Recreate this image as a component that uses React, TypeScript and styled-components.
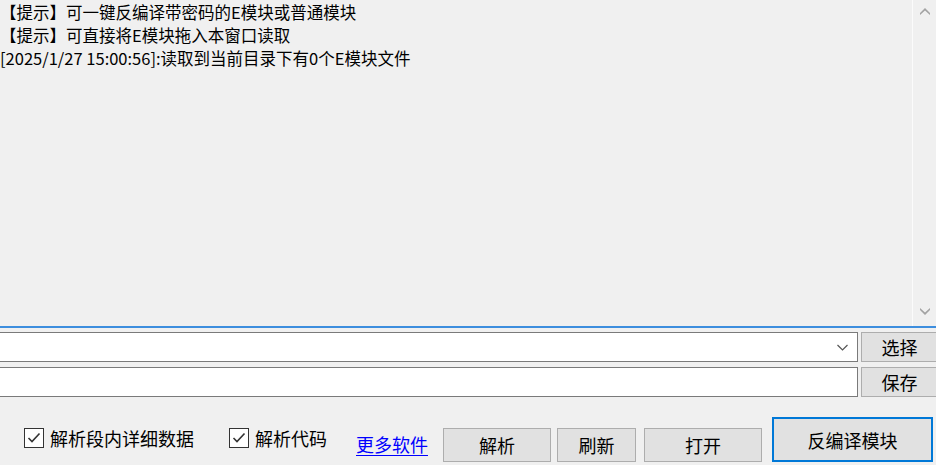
import React, { FC } from 'react';
import styled, { createGlobalStyle } from 'styled-components';

const GlobalStyle = createGlobalStyle`
  html, body {
    margin: 0;
    padding: 0;
    background: #f0f0f0;
    overflow: hidden;
  }
  * {
    box-sizing: border-box;
  }
`;

const Window = styled.div`
  width: 936px;
  height: 465px;
  overflow: hidden;
  background: #f0f0f0;
  display: flex;
  flex-direction: column;
  font-family: "Noto Sans CJK SC", "Microsoft YaHei", sans-serif;
  color: #000;
`;

const LogPanel = styled.div`
  height: 328px;
  flex: 0 0 auto;
  display: flex;
  border-bottom: 2px solid #3d8ede;
`;

const LogText = styled.div`
  flex: 1;
  padding: 1px 0 0 0;
  font-size: 16.5px;
  line-height: 23px;
`;

const LogLine = styled.div`
  white-space: nowrap;
`;

const ScrollBar = styled.div`
  width: 24px;
  border-left: 1px solid #fbfbfb;
  display: flex;
  flex-direction: column;
  justify-content: space-between;
  align-items: center;
  padding: 8px 0 11px;
`;

const FormArea = styled.div`
  flex: 1;
  display: flex;
  flex-direction: column;
  gap: 5px;
  padding-top: 4px;
`;

const FieldRow = styled.div`
  height: 30px;
  display: flex;
  gap: 3px;
  margin: 0 -2px;
`;

const Field = styled.div`
  flex: 1;
  background: #fff;
  border: 1px solid #7a7a7a;
  display: flex;
  align-items: center;
  justify-content: flex-end;
  padding-right: 9px;
`;

const Button = styled.button<{ $w: number; $h: number; $ml?: number; $default?: boolean }>`
  flex: 0 0 ${(p) => p.$w}px;
  height: ${(p) => p.$h}px;
  margin-left: ${(p) => p.$ml ?? 0}px;
  background: #e1e1e1;
  border: ${(p) => (p.$default ? '2px solid #0078d7' : '1px solid #adadad')};
  font-family: inherit;
  font-size: 18px;
  line-height: 1;
  color: #000;
  padding: 0;
  display: flex;
  align-items: center;
  justify-content: center;
`;

const ActionRow = styled.div`
  flex: 1;
  display: flex;
  align-items: flex-end;
  padding: 0 0 3px 24px;
`;

const CheckLabel = styled.label<{ $ml?: number }>`
  display: flex;
  align-items: center;
  gap: 6px;
  margin-left: ${(p) => p.$ml ?? 0}px;
  margin-bottom: 12px;
  font-size: 18px;
  line-height: 24px;
  white-space: nowrap;
`;

const CheckBox = styled.span`
  width: 20px;
  height: 20px;
  border: 1px solid #333;
  background: #fff;
  display: flex;
  align-items: center;
  justify-content: center;
`;

const Link = styled.a<{ $ml?: number }>`
  margin-left: ${(p) => p.$ml ?? 0}px;
  margin-bottom: 6px;
  font-size: 18px;
  line-height: 24px;
  color: #0000ff;
  text-decoration: underline;
  text-underline-offset: 3px;
  white-space: nowrap;
`;

const ArrowUp: FC = () => (
  <svg width="10" height="7" viewBox="0 0 10 7">
    <path d="M0 5 L5 0 L10 5 L10 7 L5 2.5 L0 7 Z" fill="#a3a3a3" />
  </svg>
);

const ArrowDown: FC = () => (
  <svg width="10" height="7" viewBox="0 0 10 7">
    <path d="M0 0 L5 4.5 L10 0 L10 2 L5 7 L0 2 Z" fill="#a3a3a3" />
  </svg>
);

const Chevron: FC = () => (
  <svg width="11" height="7" viewBox="0 0 11 7">
    <path d="M0.5 1 L5.5 6 L10.5 1" fill="none" stroke="#555" strokeWidth="1.2" />
  </svg>
);

const Check: FC = () => (
  <svg width="14" height="12" viewBox="0 0 14 12">
    <path d="M1.5 6 L5 9.5 L12.5 1.5" fill="none" stroke="#333" strokeWidth="1.6" />
  </svg>
);

const App: FC = () => {
  return (
    <>
      <GlobalStyle />
      <Window>
        <LogPanel>
          <LogText>
            <LogLine>【提示】可一键反编译带密码的E模块或普通模块</LogLine>
            <LogLine>【提示】可直接将E模块拖入本窗口读取</LogLine>
            <LogLine>[2025/1/27 15:00:56]:读取到当前目录下有0个E模块文件</LogLine>
          </LogText>
          <ScrollBar>
            <ArrowUp />
            <ArrowDown />
          </ScrollBar>
        </LogPanel>

        <FormArea>
          <FieldRow>
            <Field>
              <Chevron />
            </Field>
            <Button $w={77} $h={30}>选择</Button>
          </FieldRow>
          <FieldRow>
            <Field />
            <Button $w={77} $h={30}>保存</Button>
          </FieldRow>

          <ActionRow>
            <CheckLabel>
              <CheckBox><Check /></CheckBox>
              解析段内详细数据
            </CheckLabel>
            <CheckLabel $ml={35}>
              <CheckBox><Check /></CheckBox>
              解析代码
            </CheckLabel>
            <Link href="#" $ml={29}>更多软件</Link>
            <Button $w={108} $h={34} $ml={15}>解析</Button>
            <Button $w={79} $h={34} $ml={6}>刷新</Button>
            <Button $w={118} $h={34} $ml={8}>打开</Button>
            <Button $w={161} $h={45} $ml={10} $default>反编译模块</Button>
          </ActionRow>
        </FormArea>
      </Window>
    </>
  );
};

export default App;
